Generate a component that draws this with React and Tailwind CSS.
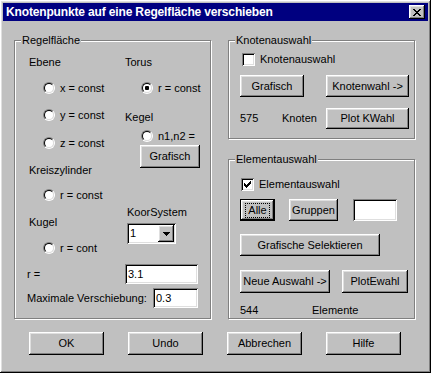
import React from 'react'

const raised =
  'bg-[#c0c0c0] shadow-[inset_-1px_-1px_0_#000,inset_1px_1px_0_#fff,inset_-2px_-2px_0_#808080,inset_2px_2px_0_#dfdfdf]'
const sunken =
  'bg-white shadow-[inset_1px_1px_0_#808080,inset_-1px_-1px_0_#fff,inset_2px_2px_0_#000,inset_-2px_-2px_0_#dfdfdf]'

const Button = ({ className = '', children }) => (
  <button className={`flex items-center justify-center ${raised} ${className}`}>{children}</button>
)

const Group = ({ label, className = '', children }) => (
  <div className={`relative border border-[#808080] shadow-[inset_1px_1px_0_#fff,1px_1px_0_#fff] ${className}`}>
    <span className="absolute -top-[8px] left-[6px] bg-[#c0c0c0] px-[1px] leading-[14px]">{label}</span>
    {children}
  </div>
)

const Radio = ({ checked, label, className = '' }) => (
  <div className={`flex h-[14px] items-center gap-[5px] ${className}`}>
    <span className="flex h-[12px] w-[12px] rounded-full border border-t-[#808080] border-l-[#808080] border-b-white border-r-white">
      <span className="flex flex-1 items-center justify-center rounded-full border border-t-black border-l-black border-b-[#dfdfdf] border-r-[#dfdfdf] bg-white">
        {checked && <span className="h-[4px] w-[4px] rounded-[1px] bg-black" />}
      </span>
    </span>
    <span>{label}</span>
  </div>
)

const Checkbox = ({ checked, label, className = '' }) => (
  <div className={`flex h-[13px] items-center gap-[5px] ${className}`}>
    <span className={`flex h-[13px] w-[13px] items-center justify-center ${sunken}`}>
      {checked && (
        <svg width="7" height="7" viewBox="0 0 7 7" shapeRendering="crispEdges">
          <path d="M6 0h1v3h-1zM5 1h1v3h-1zM4 2h1v3h-1zM3 3h1v3h-1zM2 4h1v3h-1zM1 3h1v3h-1zM0 2h1v3h-1z" fill="#000" />
        </svg>
      )}
    </span>
    <span>{label}</span>
  </div>
)

const Label = ({ className = '', children }) => (
  <div className={`flex h-[14px] items-center ${className}`}>{children}</div>
)

export default function App() {
  return (
    <div className="font-['Liberation_Sans',Arial,sans-serif] text-[11px] text-black">
      <div className={`flex h-[373px] w-[431px] flex-col p-[3px] ${raised}`}>
        {/* Title bar */}
        <div className="flex h-[18px] shrink-0 items-center justify-between bg-[#000080] pl-[3px] pr-[3px]">
          <span className="text-[12px] font-bold tracking-[-0.15px] text-white">
            Knotenpunkte auf eine Regelfläche verschieben
          </span>
          <span className={`flex h-[14px] w-[16px] items-center justify-center ${raised}`}>
            <svg width="8" height="7" viewBox="0 0 8 7" shapeRendering="crispEdges">
              <path d="M0 0h2v1h-2zM6 0h2v1h-2zM1 1h2v1h-2zM5 1h2v1h-2zM2 2h4v1h-4zM3 3h2v1h-2zM2 4h4v1h-4zM1 5h2v1h-2zM5 5h2v1h-2zM0 6h2v1h-2zM6 6h2v1h-2z" fill="#000" />
            </svg>
          </span>
        </div>

        {/* Body */}
        <div className="mt-[19px] flex pl-[11px]">
          {/* Regelfläche */}
          <Group label="Regelfläche" className="h-[279px] w-[197px] pl-[12px]">
            <div className="flex h-[214px]">
              <div className="flex w-[98px] flex-col pl-[2px] pt-[14px]">
                <Label>Ebene</Label>
                <Radio label="x = const" className="ml-[14px] mt-[12px]" />
                <Radio label="y = const" className="ml-[14px] mt-[13px]" />
                <Radio label="z = const" className="ml-[14px] mt-[14px]" />
                <Label className="mt-[13px]">Kreiszylinder</Label>
                <Radio label="r = const" className="ml-[14px] mt-[11px]" />
                <Label className="mt-[13px]">Kugel</Label>
                <Radio label="r = cont" className="ml-[14px] mt-[12px]" />
              </div>
              <div className="flex flex-col pt-[14px]">
                <Label>Torus</Label>
                <Radio checked label="r = const" className="ml-[16px] mt-[12px]" />
                <Label className="mt-[15px]">Kegel</Label>
                <Radio label="n1,n2 =" className="ml-[16px] mt-[5px]" />
                <Button className="ml-[15px] mt-[2px] h-[23px] w-[60px]">Grafisch</Button>
                <Label className="ml-[2px] mt-[37px]">KoorSystem</Label>
                <div className={`ml-[2px] mt-[4px] flex h-[21px] w-[49px] items-center p-[2px] ${sunken}`}>
                  <span className="flex-1 pl-[1px]">1</span>
                  <span className={`flex h-[17px] w-[16px] items-center justify-center ${raised}`}>
                    <svg width="7" height="4" viewBox="0 0 7 4" shapeRendering="crispEdges">
                      <path d="M0 0h7v1h-7zM1 1h5v1h-5zM2 2h3v1h-3zM3 3h1v1h-1z" fill="#000" />
                    </svg>
                  </span>
                </div>
              </div>
            </div>
            <div className="mt-[9px] flex h-[20px] items-center">
              <span className="w-[98px]">r =</span>
              <div className={`flex h-[20px] w-[73px] items-center pl-[3px] ${sunken}`}>3.1</div>
            </div>
            <div className="mt-[4px] flex h-[20px] items-center">
              <span className="w-[126px]">Maximale Verschiebung:</span>
              <div className={`flex h-[20px] w-[45px] items-center pl-[3px] ${sunken}`}>0.3</div>
            </div>
          </Group>

          {/* Right column */}
          <div className="ml-[17px] flex w-[187px] flex-col">
            <Group label="Knotenauswahl" className="h-[99px] pl-[11px]">
              <Checkbox label="Knotenauswahl" className="ml-[2px] mt-[12px]" />
              <div className="mt-[9px] flex">
                <Button className="h-[22px] w-[64px]">Grafisch</Button>
                <Button className="ml-[22px] h-[22px] w-[83px]">Knotenwahl -&gt;</Button>
              </div>
              <div className="mt-[11px] flex h-[21px] items-center">
                <span className="w-[42px]">575</span>
                <span className="w-[44px]">Knoten</span>
                <Button className="h-[21px] w-[83px]">Plot KWahl</Button>
              </div>
            </Group>

            <Group label="Elementauswahl" className="mt-[20px] h-[160px] pl-[11px]">
              <Checkbox checked label="Elementauswahl" className="ml-[1px] mt-[18px]" />
              <div className="mt-[8px] flex">
                <button className="flex h-[22px] w-[35px] border border-black">
                  <span className={`flex flex-1 items-center justify-center ${raised}`}>
                    <span className="border border-dotted border-black px-[2px] py-[1px] leading-[11px]">Alle</span>
                  </span>
                </button>
                <Button className="ml-[14px] h-[22px] w-[49px]">Gruppen</Button>
                <div className={`ml-[15px] h-[22px] w-[44px] ${sunken}`} />
              </div>
              <Button className="mt-[13px] h-[22px] w-[140px]">Grafische Selektieren</Button>
              <div className="mt-[14px] flex">
                <Button className="h-[23px] w-[90px]">Neue Auswahl -&gt;</Button>
                <Button className="ml-[12px] h-[23px] w-[66px]">PlotEwahl</Button>
              </div>
              <div className="mt-[10px] flex h-[14px] items-center">
                <span className="w-[72px]">544</span>
                <span>Elemente</span>
              </div>
            </Group>
          </div>
        </div>

        {/* Bottom buttons */}
        <div className="mt-[13px] flex gap-[24px] pl-[26px]">
          <Button className="h-[23px] w-[75px]">OK</Button>
          <Button className="h-[23px] w-[75px]">Undo</Button>
          <Button className="h-[23px] w-[75px]">Abbrechen</Button>
          <Button className="h-[23px] w-[75px]">Hilfe</Button>
        </div>
      </div>
    </div>
  )
}
